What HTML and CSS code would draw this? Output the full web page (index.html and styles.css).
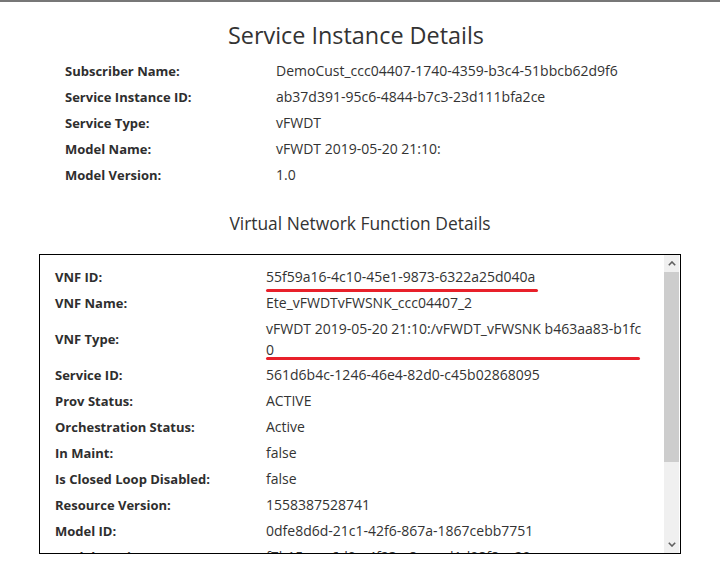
FILE: index.html
```html
<!DOCTYPE html>
<html lang="en">
<head>
<meta charset="utf-8">
<title>Service Instance Details</title>
<link rel="stylesheet" href="styles.css">
</head>
<body>
<div class="topbar"></div>
<main class="page">
  <h1 class="title">Service Instance Details</h1>
  <div class="details service">
    <div class="label">Subscriber Name:</div><div class="value">DemoCust_ccc04407-1740-4359-b3c4-51bbcb62d9f6</div>
    <div class="label">Service Instance ID:</div><div class="value">ab37d391-95c6-4844-b7c3-23d111bfa2ce</div>
    <div class="label">Service Type:</div><div class="value">vFWDT</div>
    <div class="label">Model Name:</div><div class="value">vFWDT 2019-05-20 21:10:</div>
    <div class="label">Model Version:</div><div class="value">1.0</div>
  </div>
  <h2 class="subtitle">Virtual Network Function Details</h2>
  <div class="vnf-box">
    <div class="vnf-scroll">
      <div class="details vnf">
        <div class="label">VNF ID:</div><div class="value"><span class="mark">55f59a16-4c10-45e1-9873-6322a25d040a</span></div>
        <div class="label">VNF Name:</div><div class="value">Ete_vFWDTvFWSNK_ccc04407_2</div>
        <div class="label label-mid">VNF Type:</div><div class="value wrap mark-block">vFWDT 2019-05-20 21:10:/vFWDT_vFWSNK b463aa83-b1fc0</div>
        <div class="label">Service ID:</div><div class="value">561d6b4c-1246-46e4-82d0-c45b02868095</div>
        <div class="label">Prov Status:</div><div class="value">ACTIVE</div>
        <div class="label">Orchestration Status:</div><div class="value">Active</div>
        <div class="label">In Maint:</div><div class="value">false</div>
        <div class="label">Is Closed Loop Disabled:</div><div class="value">false</div>
        <div class="label">Resource Version:</div><div class="value">1558387528741</div>
        <div class="label">Model ID:</div><div class="value">0dfe8d6d-21c1-42f6-867a-1867cebb7751</div>
        <div class="label">Model Version ID:</div><div class="value">f7b15aaa-6d0e-4f23-a8ee-ad1d98f8ea20</div>
        <div class="label">Model Customization ID:</div><div class="value">e1e2b8a7-3b4c-4d09-9f1e-2c9a3b7d6f41</div>
        <div class="label">NF Type:</div><div class="value">FIREWALL</div>
        <div class="label">NF Role:</div><div class="value">vFW</div>
        <div class="label">NF Function:</div><div class="value">vFWSNK</div>
      </div>
    </div>
    <div class="scrollbar">
      <div class="sb-btn">
        <svg width="8" height="5" viewBox="0 0 8 5"><polyline points="0.8,4.2 4,1 7.2,4.2" fill="none" stroke="#606060" stroke-width="1.6"/></svg>
      </div>
      <div class="sb-track"><div class="sb-thumb"></div></div>
      <div class="sb-btn">
        <svg width="8" height="5" viewBox="0 0 8 5"><polyline points="0.8,0.8 4,4 7.2,0.8" fill="none" stroke="#606060" stroke-width="1.6"/></svg>
      </div>
    </div>
  </div>
</main>
</body>
</html>
```
FILE: styles.css
```css
* { box-sizing: border-box; }
html, body { margin: 0; padding: 0; background: #fff; }
body {
  font-family: "Open Sans", "Noto Sans", "Liberation Sans", sans-serif;
  font-size: 13px;
  color: #333;
}
.topbar { height: 2px; background: #777; }
.page { width: 720px; }
.title {
  margin: 18px 0 0;
  font-size: 23.4px;
  line-height: 30px;
  font-weight: 400;
  text-align: center;
  padding-right: 8px;
}
.subtitle {
  margin: 23px 0 0;
  font-size: 17.4px;
  line-height: 24px;
  font-weight: 400;
  text-align: center;
}
.details {
  display: grid;
  grid-template-columns: 211px 378px;
  align-items: start;
}
.details .label, .details .value {
  line-height: 20px;
  padding: 3px 0;
}
.details .label { font-weight: 700; font-size: 13px; color: #2e2e2e; }
.details .value { font-size: 14px; }
.details .label-mid { align-self: center; }
.service { margin: 8px 0 0 65px; }
.details .value.wrap { word-break: break-all; line-height: 21px; padding: 2px 0; }
.mark { position: relative; display: inline-block; }
.mark::after {
  content: "";
  position: absolute;
  left: 0;
  right: -3px;
  bottom: -5px;
  height: 3px;
  border-radius: 2px;
  background: #e8202a;
}
.mark-block { position: relative; }
.mark-block::after {
  content: "";
  position: absolute;
  left: 0;
  right: 4px;
  bottom: 2px;
  height: 3px;
  border-radius: 2px;
  background: #e8202a;
}
.vnf-box {
  margin: 19px 0 0 39px;
  width: 642px;
  height: 300px;
  border: 1px solid #000;
  display: flex;
}
.vnf-scroll {
  flex: 1;
  overflow: hidden;
  padding: 9px 0 0 15px;
}
.scrollbar {
  width: 15px;
  margin-right: 1px;
  background: #f0f0f0;
  display: flex;
  flex-direction: column;
}
.sb-btn {
  height: 17px;
  display: flex;
  align-items: center;
  justify-content: center;
}
.sb-track { flex: 1; }
.sb-thumb { height: 190px; background: #cdcdcd; }
```
